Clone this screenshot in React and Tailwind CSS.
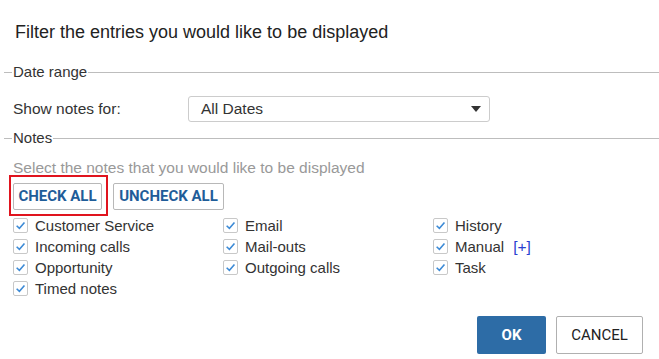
import React, { useState } from 'react';

const notes = [
  ['Customer Service', 'Email', 'History'],
  ['Incoming calls', 'Mail-outs', 'Manual'],
  ['Opportunity', 'Outgoing calls', 'Task'],
  ['Timed notes'],
];

const Legend = ({ children }) => (
  <div className="flex items-center">
    <div className="h-px w-[8px] bg-[#bdbdbd]" />
    <span className="px-px text-[15px] leading-5 text-[#333]">{children}</span>
    <div className="h-px flex-1 bg-[#bdbdbd]" />
  </div>
);

const CheckBox = ({ checked, onChange, label, extra }) => (
  <label className="flex h-[21px] items-center gap-[7px]">
    <span
      onClick={onChange}
      className="flex h-[15px] w-[15px] items-center justify-center rounded-[2px] border border-[#c8c8c8] bg-white"
    >
      {checked ? (
        <svg width="11" height="11" viewBox="0 0 10 10">
          <path d="M1.5 5.2 L4 7.6 L8.6 2.2" fill="none" stroke="#3c8ad6" strokeWidth="1.4" />
        </svg>
      ) : null}
    </span>
    <span className="text-[15px] leading-5 text-[#333]">{label}</span>
    {extra}
  </label>
);

export default function App() {
  const [checked, setChecked] = useState(() => notes.flat().reduce((acc, n) => ({ ...acc, [n]: true }), {}));

  const setAll = (value) => setChecked(notes.flat().reduce((acc, n) => ({ ...acc, [n]: value }), {}));

  return (
    <div className="h-[359px] w-[659px] bg-white font-['Liberation_Sans',Arial,sans-serif]">
      <h1 className="pl-[15px] pt-[22px] text-[18px] leading-5 text-[#222]">Filter the entries you would like to be displayed</h1>

      <div className="mt-[20px] pl-[4px]">
        <Legend>Date range</Legend>
        <div className="mt-[14px] flex items-center pl-[9px]">
          <span className="w-[175px] text-[15.5px] text-[#333]">Show notes for:</span>
          <div className="flex h-[26px] w-[302px] items-center justify-between rounded-[3px] border border-[#cccccc] pl-[12px] pr-[8px]">
            <span className="text-[15.5px] text-[#333]">All Dates</span>
            <svg width="10" height="6" viewBox="0 0 10 6">
              <path d="M0 0 H10 L5 6 Z" fill="#333" />
            </svg>
          </div>
        </div>

        <div className="mt-[6px]">
          <Legend>Notes</Legend>
        </div>
        <div className="pl-[9px]">
          <p className="mt-[10px] text-[15.5px] leading-5 text-[#999]">Select the notes that you would like to be displayed</p>
          <div className="-mt-[3px] flex items-start gap-[5px]">
            <div className="-ml-[4px] border-2 border-[#e0141e] pb-[4px] pl-[2px] pr-[4px] pt-[6px]">
              <button
                onClick={() => setAll(true)}
                className="h-[27px] w-[89px] rounded-[2px] border border-[#b8b8b8] bg-white font-['Roboto',sans-serif] text-[15px] font-bold text-[#1f5d99]"
              >
                CHECK ALL
              </button>
            </div>
            <button
              onClick={() => setAll(false)}
              className="mt-[8px] h-[27px] w-[111px] rounded-[2px] border border-[#b8b8b8] bg-white font-['Roboto',sans-serif] text-[15px] font-bold text-[#1f5d99]"
            >
              UNCHECK ALL
            </button>
          </div>
          <div className="-mt-[1px] grid grid-cols-[210px_210px_1fr]">
            {notes.flat().map((n) => (
              <CheckBox
                key={n}
                label={n}
                checked={checked[n]}
                onChange={() => setChecked((c) => ({ ...c, [n]: !c[n] }))}
                extra={n === 'Manual' ? <span className="ml-[2px] text-[15.5px] text-[#2a3fd0]">[+]</span> : null}
              />
            ))}
          </div>
        </div>
      </div>

      <div className="mt-[17px] flex justify-end gap-[10px] pr-[16px]">
        <button className="h-[38px] w-[69px] rounded-[2px] bg-[#2d6ca6] font-['Roboto',sans-serif] text-[15px] font-bold text-white">
          OK
        </button>
        <button className="h-[38px] w-[87px] rounded-[2px] border border-[#b0b0b0] bg-white font-['Roboto',sans-serif] text-[15px] text-[#222]">
          CANCEL
        </button>
      </div>
    </div>
  );
}
